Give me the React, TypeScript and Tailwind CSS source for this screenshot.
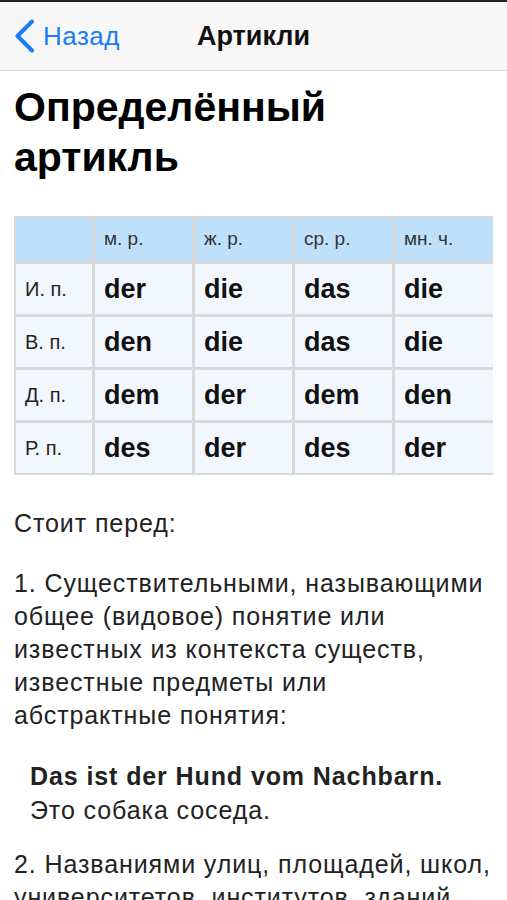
import React from 'react';

const headers = ['м. р.', 'ж. р.', 'ср. р.', 'мн. ч.'];

const rows: { label: string; forms: string[] }[] = [
  { label: 'И. п.', forms: ['der', 'die', 'das', 'die'] },
  { label: 'В. п.', forms: ['den', 'die', 'das', 'die'] },
  { label: 'Д. п.', forms: ['dem', 'der', 'dem', 'den'] },
  { label: 'Р. п.', forms: ['des', 'der', 'des', 'der'] },
];

function BackChevron() {
  return (
    <svg width="22" height="34" viewBox="0 0 22 34" fill="none" className="shrink-0">
      <path d="M19 2.5 L4.5 17 L19 31.5" stroke="#1a7cf5" strokeWidth="4" strokeLinecap="round" strokeLinejoin="round" />
    </svg>
  );
}

export default function App() {
  return (
    <div
      className="w-[507px] h-[900px] overflow-hidden bg-white text-black"
      style={{ fontFamily: '"Liberation Sans", Arial, sans-serif' }}
    >
      <div className="h-[2px] bg-[#222]" />
      <header className="relative flex h-[69px] items-center border-b border-[#dcdcdc] bg-[#f7f7f7]">
        <div className="flex items-center gap-[8px] pl-[13px]">
          <BackChevron />
          <span className="text-[26px] tracking-[0.5px] text-[#1a7cf5]">Назад</span>
        </div>
        <span className="absolute left-1/2 -translate-x-1/2 text-[27px] font-semibold text-[#111]">Артикли</span>
      </header>

      <main className="px-[14px]">
        <h1 className="mt-[11px] text-[41px] font-bold leading-[50px]">Определённый артикль</h1>

        <div className="mt-[34px] grid grid-cols-[76px_97px_97px_97px_98px] gap-[3px] border-2 border-[#d9d9d9] bg-[#d9d9d9]">
          <div className="h-[43px] bg-[#bfe0fb]" />
          {headers.map((h) => (
            <div key={h} className="flex h-[43px] items-center bg-[#bfe0fb] pl-[9px] text-[19px] text-[#333]">
              {h}
            </div>
          ))}
          {rows.map((r) => (
            <React.Fragment key={r.label}>
              <div className="flex h-[50px] items-center bg-[#f1f7fd] pl-[9px] text-[20px] text-[#222]">
                {r.label}
              </div>
              {r.forms.map((f, i) => (
                <div
                  key={i}
                  className="flex h-[50px] items-center bg-[#f1f7fd] pl-[9px] text-[27px] font-bold text-[#111]"
                >
                  {f}
                </div>
              ))}
            </React.Fragment>
          ))}
        </div>

        <div className="mt-[32px] text-[25px] leading-[33px] tracking-[0.9px] text-[#222]">
          <p>Стоит перед:</p>
          <p className="mt-[27px]">
            1. Существительными, называющими общее (видовое) понятие или известных из контекста существ, известные
            предметы или абстрактные понятия:
          </p>
          <div className="mt-[27px] pl-[16px] leading-[34px]">
            <p className="font-bold">Das ist der Hund vom Nachbarn.</p>
            <p>Это собака соседа.</p>
          </div>
          <p className="mt-[21px]">
            2. Названиями улиц, площадей, школ, университетов, институтов, зданий, музеев, театров, кинотеатров,
            гостиниц:
          </p>
        </div>
      </main>
    </div>
  );
}
